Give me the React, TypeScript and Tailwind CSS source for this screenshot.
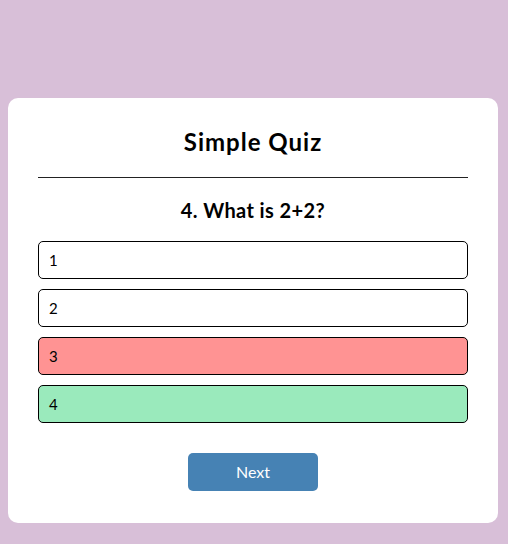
import React from 'react';

const answers = [
  { text: '1', state: 'none' },
  { text: '2', state: 'none' },
  { text: '3', state: 'wrong' },
  { text: '4', state: 'right' },
];

const App = () => {
  return (
    <div className="min-h-[544px] bg-[#d8bfd8] pt-[98px] pb-[22px] px-2" style={{ fontFamily: 'Lato, "Open Sans", sans-serif' }}>
      <div className="w-[490px] bg-white rounded-[10px] px-[30px] pt-[30px] pb-[32px]">
        {/* Header */}
        <h1 className="text-center text-[24px] font-bold text-[#000] leading-[28px] tracking-[1px] pb-[21px] border-b border-[#222]">
          Simple Quiz
        </h1>

        {/* Question */}
        <h2 className="text-center text-[20px] font-bold text-[#000] leading-[24px] tracking-[0.4px] mt-[20px]">
          4. What is 2+2?
        </h2>

        <div className="flex flex-col gap-[10px] mt-[19px]">
          {answers.map((a) => (
            <button
              key={a.text}
              className={`h-[38px] w-full text-left px-[10px] text-[15px] text-black border border-black rounded-[5px] ${
                a.state === 'wrong' ? 'bg-[#ff9393]' : a.state === 'right' ? 'bg-[#9aeabc]' : 'bg-white'
              }`}
            >
              {a.text}
            </button>
          ))}
        </div>

        <div className="flex justify-center mt-[30px]">
          <button className="w-[130px] h-[38px] bg-[#4682b4] text-white text-[16px] rounded-[5px]">
            Next
          </button>
        </div>
      </div>
    </div>
  );
};

export default App;
